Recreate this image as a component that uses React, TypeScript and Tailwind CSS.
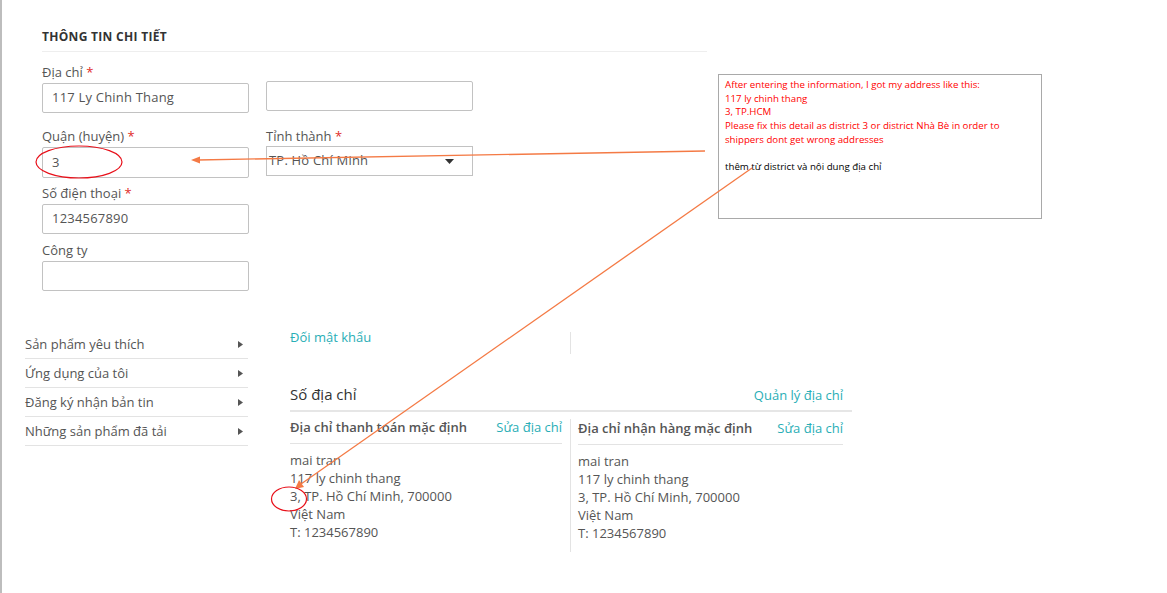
import React from "react";

const TEAL = "text-[#29aeb6]";

function Label({ text, req }: { text: string; req?: boolean }) {
  return (
    <div className="h-[18px] text-[13px] leading-[18px] text-[#555]">
      {text}
      {req && <span className="text-[#e02b27]"> *</span>}
    </div>
  );
}

function Input({ value, className = "" }: { value?: string; className?: string }) {
  return (
    <div
      className={`h-[30px] w-[207px] border border-[#c2c2c2] rounded-[2px] px-[9px] flex items-center text-[13px] tracking-[0.2px] text-[#555] ${className}`}
    >
      {value}
    </div>
  );
}

function SideItem({ text }: { text: string }) {
  return (
    <div className="h-[29px] border-b border-[#e3e3e3] flex items-center justify-between pr-[5px] pt-[1px] text-[13px] text-[#555]">
      <span>{text}</span>
      <svg width="5" height="7" viewBox="0 0 5 7">
        <polygon points="0,0 5,3.5 0,7" fill="#555" />
      </svg>
    </div>
  );
}

function AddrCol({ title, lines, className = "" }: { title: string; lines: string[]; className?: string }) {
  return (
    <div className={className}>
      <div className="flex justify-between items-center pt-[6px] pb-[7px] border-b border-[#e3e3e3]">
        <span className="text-[13px] leading-[18px] font-semibold text-[#555]">{title}</span>
        <span className={`text-[13px] leading-[18px] ${TEAL}`}>Sửa địa chỉ</span>
      </div>
      <div className="pt-[7px] text-[13px] leading-[18px] text-[#555]">
        {lines.map((l) => (
          <div key={l}>{l}</div>
        ))}
      </div>
    </div>
  );
}

export default function App() {
  const addr = ["mai tran", "117 ly chinh thang", "3, TP. Hồ Chí Minh, 700000", "Việt Nam", "T: 1234567890"];
  return (
    <div
      className="relative w-[1167px] h-[593px] bg-white border-l-2 border-[#bdbdbd] overflow-hidden"
      style={{ fontFamily: '"Open Sans", "Noto Sans", sans-serif' }}
    >
      {/* Top form */}
      <div className="pl-[40px] pt-[29px] w-[705px]">
        <div className="text-[12px] leading-[16px] font-bold tracking-[0.3px] text-[#333] pb-[6px] border-b border-[#eeeeee]">
          THÔNG TIN CHI TIẾT
        </div>
        <div className="flex gap-[17px] mt-[11px]">
          <div>
            <Label text="Địa chỉ" req />
            <Input value="117 Ly Chinh Thang" className="mt-[2px]" />
          </div>
          <div className="pt-[18px]">
            <Input />
          </div>
        </div>
        <div className="flex gap-[17px] mt-[14px]">
          <div>
            <Label text="Quận (huyện)" req />
            <Input value="3" className="mt-[2px] h-[31px]" />
          </div>
          <div>
            <Label text="Tỉnh thành" req />
            <div className="mt-[1px] h-[30px] w-[207px] border border-[#c2c2c2] pl-[2px] pr-[18px] flex items-center justify-between text-[13px] tracking-[0.2px] text-[#555]">
              <span>TP. Hồ Chí Minh</span>
              <svg width="9" height="5" viewBox="0 0 9 5">
                <polygon points="0,0 9,0 4.5,5" fill="#333" />
              </svg>
            </div>
          </div>
        </div>
        <div className="mt-[6px]">
          <Label text="Số điện thoại" req />
          <Input value="1234567890" className="mt-[2px]" />
        </div>
        <div className="mt-[7px]">
          <Label text="Công ty" />
          <Input className="mt-[2px]" />
        </div>
      </div>

      {/* Lower section */}
      <div className="flex mt-[29px]">
        <div className="ml-[23px] w-[223px] mt-[10px]">
          <SideItem text="Sản phẩm yêu thích" />
          <SideItem text="Ứng dụng của tôi" />
          <SideItem text="Đăng ký nhận bản tin" />
          <SideItem text="Những sản phẩm đã tải" />
        </div>
        <div className="ml-[42px] w-[562px] mt-[3px]">
          <div className="flex">
            <div className="w-[280px] pt-[1px]">
              <span className={`text-[13px] leading-[18px] ${TEAL}`}>Đối mật khẩu</span>
            </div>
            <div className="mt-[9px] h-[22px] border-l border-[#e3e3e3]" />
          </div>
          <div className="mt-[30px] flex justify-between items-end pb-[6px] border-b-2 border-[#e6e6e6]">
            <span className="text-[15px] leading-[20px] text-[#333]">Số địa chỉ</span>
            <span className={`text-[13px] leading-[18px] mr-[9px] ${TEAL}`}>Quản lý địa chỉ</span>
          </div>
          <div className="flex">
            <AddrCol title="Địa chỉ thanh toán mặc định" lines={addr} className="w-[272px]" />
            <div className="ml-[8px] pl-[7px] border-l border-[#e3e3e3] w-[273px] mt-[7px] pb-[10px]">
              <AddrCol title="Địa chỉ nhận hàng mặc định" lines={addr} className="-mt-[6px]" />
            </div>
          </div>
        </div>
      </div>

      {/* Annotation box */}
      <div
        className="absolute left-[716px] top-[74px] w-[324px] h-[145px] border border-[#a9a9a9] bg-white px-[6px] pt-[3px] text-[9.7px] leading-[13.7px]"
        style={{ fontFamily: '"Open Sans", sans-serif' }}
      >
        <div className="text-[#ff0000]">After entering the information, I got my address like this:</div>
        <div className="text-[#ff0000]">117 ly chinh thang</div>
        <div className="text-[#ff0000]">3, TP.HCM</div>
        <div className="text-[#ff0000]">Please fix this detail as district 3 or district Nhà Bè in order to</div>
        <div className="text-[#ff0000]">shippers dont get wrong addresses</div>
        <div className="h-[13.7px]" />
        <div className="text-black">thêm từ district và nội dung địa chỉ</div>
      </div>

      {/* Arrows and circles */}
      <svg className="absolute left-[-2px] top-0 pointer-events-none" width="1167" height="593">
        <line x1="705" y1="151" x2="198" y2="160" stroke="#f47a45" strokeWidth="1.3" />
        <polygon points="191,160 200,156.5 200,163.5" fill="#f47a45" />
        <line x1="752" y1="168" x2="301" y2="484" stroke="#f47a45" strokeWidth="1.3" />
        <polygon points="295,489 299,480 304,487" fill="#f47a45" />
        <ellipse cx="79" cy="162" rx="43" ry="16" fill="none" stroke="#e8101a" strokeWidth="1.2" />
        <ellipse cx="289" cy="499" rx="17.5" ry="12" fill="none" stroke="#e8101a" strokeWidth="1.2" />
      </svg>
    </div>
  );
}
